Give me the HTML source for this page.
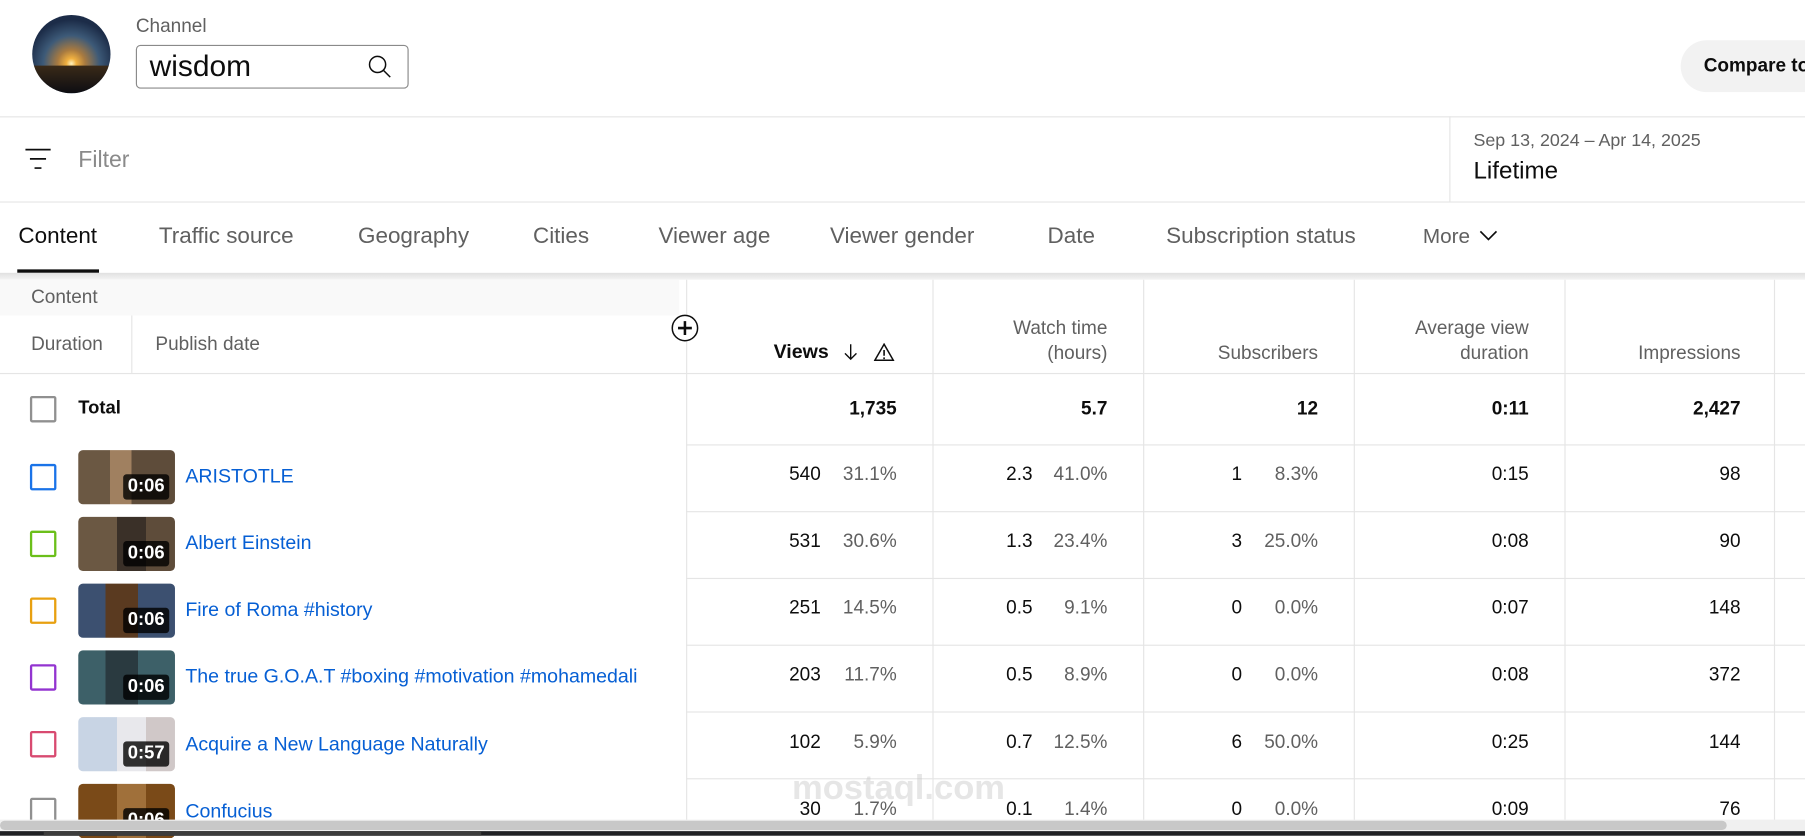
<!DOCTYPE html>
<html><head><meta charset="utf-8"><style>
*{margin:0;padding:0;box-sizing:border-box}
html,body{width:1805px;height:836px;overflow:hidden;background:#fff}
#s{position:absolute;left:0;top:0;width:1568px;height:726px;transform:scale(1.15115);transform-origin:0 0;font-family:"Liberation Sans",Arial,sans-serif;color:#0d0d0d}
.a{position:absolute;white-space:nowrap}
.hl{position:absolute;left:0;height:1px;background:#e5e5e5}
.vl{position:absolute;width:1px;background:#e5e5e5}
.tab{position:absolute;top:194px;font-size:19.5px;color:#606060}
.hd{position:absolute;font-size:16.5px;color:#606060;text-align:right;line-height:22px}
.cb{position:absolute;left:26px;width:23px;height:23px;border:2px solid;border-radius:2px}
.th{position:absolute;left:68px;width:84px;height:47px;border-radius:4px;overflow:hidden}
.th span{position:absolute;right:5px;bottom:4px;background:rgba(0,0,0,.8);color:#fff;font-size:16px;font-weight:bold;padding:2px 4px;border-radius:3px}
.ti{position:absolute;left:161px;font-size:17px;color:#065fd4}
.n{position:absolute;font-size:16.5px;text-align:right;color:#0d0d0d}
.p{position:absolute;font-size:16.5px;text-align:right;color:#606060}
</style></head><body><div id="s">
<div class="a" style="left:28px;top:13px;width:68px;height:68px;border-radius:50%;background:radial-gradient(circle at 50% 62%,#fff3c0 0,#f0b040 8%,#a87a40 22%,#3d5a78 45%,#1c2c48 70%);overflow:hidden"><div style="position:absolute;left:0;top:44px;width:68px;height:24px;background:linear-gradient(#3a2a18,#0d0d12)"></div></div>
<div class="a" style="left:118px;top:14px;font-size:16.5px;color:#606060">Channel</div>
<div class="a" style="left:118px;top:39px;width:237px;height:38px;border:1px solid #8a8a8a;border-radius:4px"></div>
<div class="a" style="left:130px;top:42px;font-size:26px;color:#0d0d0d">wisdom</div>
<svg class="a" style="left:318px;top:46px" width="24" height="24" viewBox="0 0 24 24"><circle cx="10" cy="10" r="7" fill="none" stroke="#0d0d0d" stroke-width="1.3"/><path d="M15 15l6 6" stroke="#0d0d0d" stroke-width="1.3"/></svg>
<div class="a" style="left:1460px;top:35px;width:140px;height:45px;border-radius:23px;background:#f2f2f2"></div>
<div class="a" style="left:1480px;top:48px;font-size:16.5px;font-weight:bold;color:#0d0d0d">Compare to</div>
<div class="hl" style="top:101px;width:1568px"></div>
<svg class="a" style="left:22px;top:129px" width="24" height="22" viewBox="0 0 24 22"><path d="M0 1h22M4 9h14M8 17h6" stroke="#0d0d0d" stroke-width="1.5"/></svg>
<div class="a" style="left:68px;top:128px;font-size:20px;color:#8a8a8a">Filter</div>
<div class="vl" style="left:1259px;top:101px;height:74px"></div>
<div class="a" style="left:1280px;top:114px;font-size:15.5px;color:#606060">Sep 13, 2024 – Apr 14, 2025</div>
<div class="a" style="left:1280px;top:137px;font-size:21px;color:#0d0d0d">Lifetime</div>
<div class="hl" style="top:175px;width:1568px"></div>
<div class="tab" style="left:16px;color:#0d0d0d">Content</div>
<div class="a" style="left:15px;top:234px;width:71px;height:3px;background:#0d0d0d"></div>
<div class="tab" style="left:138px">Traffic source</div>
<div class="tab" style="left:311px">Geography</div>
<div class="tab" style="left:463px">Cities</div>
<div class="tab" style="left:572px">Viewer age</div>
<div class="tab" style="left:721px">Viewer gender</div>
<div class="tab" style="left:910px">Date</div>
<div class="tab" style="left:1013px">Subscription status</div>
<div class="tab" style="left:1236px;top:195px;font-size:18px">More</div>
<svg class="a" style="left:1285px;top:200px" width="16" height="10" viewBox="0 0 16 10"><path d="M1 1l7 7 7-7" fill="none" stroke="#0d0d0d" stroke-width="1.4"/></svg>
<div class="a" style="left:0;top:237px;width:1568px;height:6px;background:linear-gradient(#e0e0e0,#f4f4f4)"></div>
<div class="a" style="left:0;top:243px;width:590px;height:31px;background:#f9f9f9"></div>
<div class="a" style="left:27px;top:249px;font-size:16.5px;color:#606060">Content</div>
<div class="a" style="left:27px;top:290px;font-size:16.5px;color:#606060">Duration</div>
<div class="vl" style="left:114px;top:274px;height:50px"></div>
<div class="a" style="left:135px;top:290px;font-size:16.5px;color:#606060">Publish date</div>
<div class="vl" style="left:596px;top:243px;height:470px"></div>
<div class="vl" style="left:810px;top:243px;height:470px"></div>
<div class="vl" style="left:993px;top:243px;height:470px"></div>
<div class="vl" style="left:1176px;top:243px;height:470px"></div>
<div class="vl" style="left:1359px;top:243px;height:470px"></div>
<div class="vl" style="left:1541px;top:243px;height:470px"></div>
<svg class="a" style="left:583px;top:273px" width="24" height="24" viewBox="0 0 24 24"><circle cx="12" cy="12" r="11" fill="#fff" stroke="#0d0d0d" stroke-width="1.3"/><path d="M12 6v12M6 12h12" stroke="#0d0d0d" stroke-width="2.2"/></svg>
<div class="a" style="left:672px;top:296px;font-size:17px;font-weight:bold;color:#0d0d0d">Views</div>
<svg class="a" style="left:731px;top:297px" width="16" height="18" viewBox="0 0 16 18"><path d="M8 2v13M3 10l5 5 5-5" fill="none" stroke="#0d0d0d" stroke-width="1.2"/></svg>
<svg class="a" style="left:759px;top:298px" width="18" height="16" viewBox="0 0 18 16"><path d="M9 1L1 15h16z" fill="none" stroke="#0d0d0d" stroke-width="1.3"/><path d="M9 6v5M9 12.5v1.5" stroke="#0d0d0d" stroke-width="1.4"/></svg>
<div class="hd" style="left:820px;width:142px;top:274px">Watch time<br>(hours)</div>
<div class="hd" style="left:1000px;width:145px;top:296px">Subscribers</div>
<div class="hd" style="left:1180px;width:148px;top:274px">Average view<br>duration</div>
<div class="hd" style="left:1360px;width:152px;top:296px">Impressions</div>
<div class="hl" style="top:324px;width:1568px"></div>
<div class="cb" style="top:344px;border-color:#909090"></div>
<div class="a" style="left:68px;top:346px;font-size:16px;font-weight:bold">Total</div>
<div class="n" style="left:600px;width:179px;top:346px;font-weight:bold">1,735</div>
<div class="n" style="left:820px;width:142px;top:346px;font-weight:bold">5.7</div>
<div class="n" style="left:1000px;width:145px;top:346px;font-weight:bold">12</div>
<div class="n" style="left:1180px;width:148px;top:346px;font-weight:bold">0:11</div>
<div class="n" style="left:1360px;width:152px;top:346px;font-weight:bold">2,427</div>
<div class="hl" style="top:386px;left:596px;width:972px"></div>
<div class="hl" style="top:444px;left:596px;width:972px"></div>
<div class="hl" style="top:502px;left:596px;width:972px"></div>
<div class="hl" style="top:560px;left:596px;width:972px"></div>
<div class="hl" style="top:618px;left:596px;width:972px"></div>
<div class="hl" style="top:676px;left:596px;width:972px"></div>

<div class="cb" style="top:403px;border-color:#1a73e8"></div>
<div class="th" style="top:391px;background:linear-gradient(90deg,#6b5843 0 33%,#a08060 33% 55%,#5e4c3a 55%)"><span>0:06</span></div>
<div class="ti" style="top:404px">ARISTOTLE</div>
<div class="n" style="left:600px;width:113px;top:403px">540</div><div class="p" style="left:720px;width:59px;top:403px">31.1%</div>
<div class="n" style="left:820px;width:77px;top:403px">2.3</div><div class="p" style="left:900px;width:62px;top:403px">41.0%</div>
<div class="n" style="left:1000px;width:79px;top:403px">1</div><div class="p" style="left:1085px;width:60px;top:403px">8.3%</div>
<div class="n" style="left:1180px;width:148px;top:403px">0:15</div>
<div class="n" style="left:1360px;width:152px;top:403px">98</div>

<div class="cb" style="top:461px;border-color:#6bbf1a"></div>
<div class="th" style="top:449px;background:linear-gradient(90deg,#6b5843 0 40%,#3a3028 40% 70%,#5e4c3a 70%)"><span>0:06</span></div>
<div class="ti" style="top:462px">Albert Einstein</div>
<div class="n" style="left:600px;width:113px;top:461px">531</div><div class="p" style="left:720px;width:59px;top:461px">30.6%</div>
<div class="n" style="left:820px;width:77px;top:461px">1.3</div><div class="p" style="left:900px;width:62px;top:461px">23.4%</div>
<div class="n" style="left:1000px;width:79px;top:461px">3</div><div class="p" style="left:1085px;width:60px;top:461px">25.0%</div>
<div class="n" style="left:1180px;width:148px;top:461px">0:08</div>
<div class="n" style="left:1360px;width:152px;top:461px">90</div>

<div class="cb" style="top:519px;border-color:#e8a010"></div>
<div class="th" style="top:507px;background:linear-gradient(90deg,#3c5070 0 28%,#5a3a20 28% 62%,#3c5070 62%)"><span>0:06</span></div>
<div class="ti" style="top:520px">Fire of Roma #history</div>
<div class="n" style="left:600px;width:113px;top:519px">251</div><div class="p" style="left:720px;width:59px;top:519px">14.5%</div>
<div class="n" style="left:820px;width:77px;top:519px">0.5</div><div class="p" style="left:900px;width:62px;top:519px">9.1%</div>
<div class="n" style="left:1000px;width:79px;top:519px">0</div><div class="p" style="left:1085px;width:60px;top:519px">0.0%</div>
<div class="n" style="left:1180px;width:148px;top:519px">0:07</div>
<div class="n" style="left:1360px;width:152px;top:519px">148</div>

<div class="cb" style="top:577px;border-color:#9334d0"></div>
<div class="th" style="top:565px;background:linear-gradient(90deg,#3d6068 0 28%,#2a3a40 28% 62%,#3d6068 62%)"><span>0:06</span></div>
<div class="ti" style="top:578px">The true G.O.A.T #boxing #motivation #mohamedali</div>
<div class="n" style="left:600px;width:113px;top:577px">203</div><div class="p" style="left:720px;width:59px;top:577px">11.7%</div>
<div class="n" style="left:820px;width:77px;top:577px">0.5</div><div class="p" style="left:900px;width:62px;top:577px">8.9%</div>
<div class="n" style="left:1000px;width:79px;top:577px">0</div><div class="p" style="left:1085px;width:60px;top:577px">0.0%</div>
<div class="n" style="left:1180px;width:148px;top:577px">0:08</div>
<div class="n" style="left:1360px;width:152px;top:577px">372</div>

<div class="cb" style="top:635px;border-color:#d84a70"></div>
<div class="th" style="top:623px;background:linear-gradient(90deg,#c8d4e4 0 40%,#e8e8ec 40% 70%,#d0c8c8 70%)"><span>0:57</span></div>
<div class="ti" style="top:637px">Acquire a New Language Naturally</div>
<div class="n" style="left:600px;width:113px;top:636px">102</div><div class="p" style="left:720px;width:59px;top:636px">5.9%</div>
<div class="n" style="left:820px;width:77px;top:636px">0.7</div><div class="p" style="left:900px;width:62px;top:636px">12.5%</div>
<div class="n" style="left:1000px;width:79px;top:636px">6</div><div class="p" style="left:1085px;width:60px;top:636px">50.0%</div>
<div class="n" style="left:1180px;width:148px;top:636px">0:25</div>
<div class="n" style="left:1360px;width:152px;top:636px">144</div>

<div class="cb" style="top:693px;border-color:#909090"></div>
<div class="th" style="top:681px;background:linear-gradient(90deg,#7a4a18 0 40%,#a0703a 40% 70%,#7a4a18 70%)"><span>0:06</span></div>
<div class="ti" style="top:695px">Confucius</div>
<div class="n" style="left:600px;width:113px;top:694px">30</div><div class="p" style="left:720px;width:59px;top:694px">1.7%</div>
<div class="n" style="left:820px;width:77px;top:694px">0.1</div><div class="p" style="left:900px;width:62px;top:694px">1.4%</div>
<div class="n" style="left:1000px;width:79px;top:694px">0</div><div class="p" style="left:1085px;width:60px;top:694px">0.0%</div>
<div class="n" style="left:1180px;width:148px;top:694px">0:09</div>
<div class="n" style="left:1360px;width:152px;top:694px">76</div>

<div class="a" style="left:688px;top:668px;font-size:30px;color:rgba(200,200,200,.45);font-weight:bold">mostaql.com</div>

<div class="a" style="left:0;top:712px;width:1568px;height:10px;background:#f0f0f0"></div>
<div class="a" style="left:0;top:713px;width:1500px;height:8px;background:#c8c8c8;border-radius:4px"></div>
<div class="a" style="left:0;top:722px;width:1568px;height:4px;background:#202124"></div>
<div class="a" style="left:38px;top:722px;width:380px;height:4px;background:#3c3c3c"></div>
</div></body></html>
